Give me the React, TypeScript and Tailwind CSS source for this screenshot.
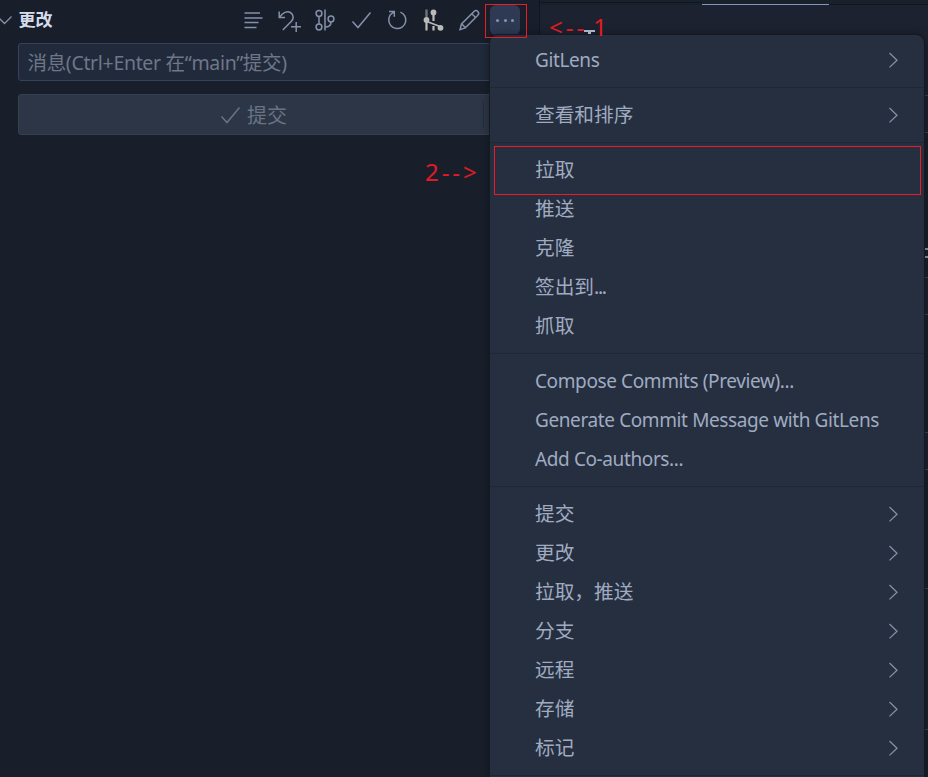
import React from 'react';

type Item = { label: string; sub?: boolean; latin?: boolean; tail?: string };

const groups: Item[][] = [
  [{ label: 'GitLens', sub: true, latin: true }],
  [{ label: '查看和排序', sub: true }],
  [{ label: '拉取' }, { label: '推送' }, { label: '克隆' }, { label: '签出到', tail: '...' }, { label: '抓取' }],
  [
    { label: 'Compose Commits (Preview)...', latin: true },
    { label: 'Generate Commit Message with GitLens', latin: true },
    { label: 'Add Co-authors...', latin: true },
  ],
  [
    { label: '提交', sub: true },
    { label: '更改', sub: true },
    { label: '拉取，推送', sub: true },
    { label: '分支', sub: true },
    { label: '远程', sub: true },
    { label: '存储', sub: true },
    { label: '标记', sub: true },
  ],
];

function Icon({ children }: { children: React.ReactNode }) {
  return (
    <svg className="h-6 w-6 shrink-0" viewBox="0 0 24 24" fill="none" stroke="currentColor" strokeWidth="1.5">
      {children}
    </svg>
  );
}

function Toolbar() {
  return (
    <div className="ml-auto flex items-center gap-3 text-[#8491aa]">
      <Icon>
        <path d="M3.5 5H19M3.5 10H21.5M3.5 14.5H17.5M3.5 19.5H15.5" />
      </Icon>
      <Icon>
        <path d="M2.2 3.5V9.5H8M2.4 9.2L5.4 6C8.7 2.9 12.8 3 14.8 5.7C16.8 8.4 16.3 11.3 14.2 13.5L5.8 22M19.2 14V24M14 18.8H24.5" />
      </Icon>
      <Icon>
        <circle cx="6" cy="5.5" r="2.9" />
        <circle cx="6" cy="19" r="2.9" />
        <circle cx="18" cy="11" r="2.9" />
        <path d="M6 8.5V16M12 1.5V22.5M18 14C18 17.8 16 19 12.2 19" />
      </Icon>
      <Icon>
        <path d="M3.5 13.5L9 19.5L21.5 4.5" />
      </Icon>
      <Icon>
        <path d="M4 3.5H9.3V8.8M9 4.1C5.5 5.6 3.8 8.6 3.8 12A8.5 8.5 0 1 0 15.4 4.1" />
      </Icon>
      <svg className="h-6 w-6 shrink-0 text-[#b9bab9]" viewBox="0 0 24 24" stroke="currentColor" fill="currentColor">
        <path d="M5.5 1.5V9" stroke="#707277" strokeWidth="2.4" />
        <path d="M5.5 14V22.5M12.5 4V13M12.5 18V22.5" strokeWidth="2.2" />
        <path d="M6.5 13.8L18.5 18.3" strokeWidth="1.6" />
        <g stroke="none">
          <circle cx="12.5" cy="4.5" r="2.9" />
          <circle cx="5.5" cy="12" r="2.9" />
          <circle cx="19.5" cy="19.8" r="2.9" />
        </g>
      </svg>
      <Icon>
        <path d="M3 21.7L4.5 16L16.8 3.7C19.7 .9 23.5 4.5 20.6 7.6L8.3 19.9ZM14.8 5.8L18.6 9.5M4.6 15.8L8.5 19.7" />
      </Icon>
      <div className="-ml-[2.6px] flex h-[30px] w-[30px] items-center justify-center gap-[4.5px] rounded-[6px] bg-[#2e3a53]">
        <i className="h-[3px] w-[3px] rounded-full bg-[#8794ad]" />
        <i className="h-[3px] w-[3px] rounded-full bg-[#8794ad]" />
        <i className="h-[3px] w-[3px] rounded-full bg-[#8794ad]" />
      </div>
    </div>
  );
}

function Sidebar() {
  return (
    <aside className="flex w-[540px] shrink-0 flex-col border-r border-[#111720] bg-[#181f2b]">
      <header className="flex h-[40px] items-center pr-[19px]">
        <svg className="h-4 w-[14px]" viewBox="0 0 14 16" fill="none" stroke="#8491aa" strokeWidth="1.3">
          <path d="M-1 6L4.5 11.5L11.5 4.5" />
        </svg>
        <h2 className="ml-[4.5px] text-[17px] font-bold leading-6 text-[#d5dcec]">更改</h2>
        <Toolbar />
      </header>
      <div className="ml-[18px] mt-[3px] flex h-[38px] items-center rounded-[3px] border border-[#36425d] bg-[#212a3a] pl-[8.5px] pt-[2px] text-[19.5px] text-[#6d7789]">
        <span className="whitespace-pre tracking-[-0.32px]">消息(Ctrl+Enter 在“main”提交)</span>
      </div>
      <div className="ml-[18px] mt-[13px] flex h-[41px] items-center rounded-[3px] border border-[#353f4e] bg-[#2d3646] text-[#697386]">
        <div className="flex h-full w-[464px] items-center justify-center pl-[3px]">
          <Icon>
            <path d="M3.5 13.5L9 19.5L21.5 4.5" />
          </Icon>
          <span className="ml-[5px] pt-[2px] text-[20px]">提交</span>
        </div>
        <div className="h-[27px] w-px bg-[#222d3c]" />
      </div>
    </aside>
  );
}

function Editor() {
  return (
    <main className="flex grow flex-col bg-[#1d2230]">
      <div className="flex h-[5px] bg-[#18202b]">
        <div className="mt-[2px] h-px w-[162px] bg-[#111720]" />
        <div className="mt-[4px] h-px w-[127px] bg-[#8198bd]" />
        <div className="mt-[4px] h-px grow bg-[#10151e]" />
      </div>
      <div className="h-[90px]" />
      <div className="h-[38px] border-y border-[#394255]" />
      <div className="h-[115px] bg-[#18202b]" />
      <div className="flex h-[29px] justify-end bg-[#18202b]">
        <div className="h-[10px] w-[3px] border-y-2 border-[#8b93a1]" />
      </div>
      <div className="h-[38px] border-y border-[#394255]" />
      <div className="h-[117px] bg-[#18202b]" />
      <div className="h-[38px] border-y border-[#394255]" />
      <div className="h-[118px] bg-[#18202b]" />
      <div className="h-[142px] border-y border-[#394255] bg-[#19222e]" />
      <div className="grow bg-[#18202b]" />
    </main>
  );
}

function Menu() {
  return (
    <nav className="absolute left-[489px] top-[34px] h-[760px] w-[436px] overflow-hidden rounded-[9px] border border-[#141922] bg-[#252f40] shadow-[0_0_8px_rgba(0,0,0,0.35)]">
      <div className="-mt-[2px]">
        {groups.map((items, g) => (
          <div key={g} className="border-b border-[#1d2735] py-[7.5px]">
            {items.map((it) => (
              <div key={it.label} className="flex h-[39px] items-center justify-between pl-[45px] pr-[23px]">
                <span
                  className={
                    it.latin
                      ? 'whitespace-pre text-[19px] leading-[37px] tracking-[-0.39px]'
                      : 'whitespace-pre pb-[1px] text-[19.7px] leading-[37px]'
                  }
                >
                  {it.label}
                  {it.tail && <span className="tracking-[-1.4px]">{it.tail}</span>}
                </span>
                {it.sub && (
                  <svg className="h-4 w-4" viewBox="0 0 16 16" fill="none" stroke="#8490a3" strokeWidth="1.3">
                    <path d="M4.5 1L12 8.2L4.5 15.4" />
                  </svg>
                )}
              </div>
            ))}
          </div>
        ))}
      </div>
    </nav>
  );
}

export default function App() {
  return (
    <div className="relative flex h-[777px] w-[928px] overflow-hidden bg-[#181f2b] font-['Noto_Sans','Noto_Sans_CJK_SC',sans-serif] text-[#a0abc0]">
      <Sidebar />
      <Editor />
      <Menu />
      <div className="absolute left-[549px] top-[12px] flex whitespace-pre text-[24px] leading-[30px] text-[#e01b24]">
        <span className="tracking-[3px]">&lt;--</span>
        <span className="ml-[6px]">1</span>
      </div>
      <div className="absolute left-[584px] top-[30px] h-[2px] w-[11px] bg-[#aab3c8]" />
      <div className="absolute left-[588px] top-[32px] h-[2px] w-[3px] bg-[#aab3c8]" />
      <div className="absolute left-[485px] top-[4px] h-[34px] w-[42px] border border-[#ed1c24]" />
      <div className="absolute left-[494px] top-[146px] h-[49px] w-[427px] border border-[#ed1c24]" />
      <span className="absolute left-[425px] top-[157px] whitespace-pre text-[24px] leading-[30px] tracking-[2.9px] text-[#e01b24]">2--&gt;</span>
    </div>
  );
}
